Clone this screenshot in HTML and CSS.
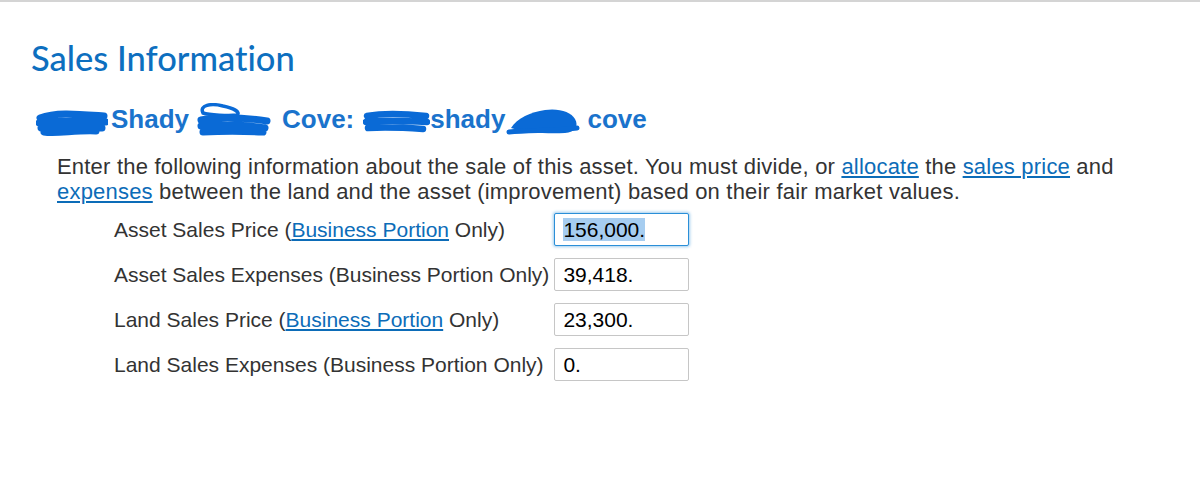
FILE: index.html
```html
<!DOCTYPE html>
<html lang="en">
<head>
<meta charset="utf-8">
<title>Sales Information</title>
<link rel="stylesheet" href="styles.css">
</head>
<body>
<div class="page">
  <h1 class="title">Sales Information</h1>
  <h2 class="subtitle"><svg class="scrib s1" width="72" height="28" viewBox="0 0 72 28"><path d="M4 10 C20 4 40 6 68 8 M3 15 C25 12 45 13 70 14 M5 20 C25 18 50 19 66 20 M8 24 C20 26 40 22 60 23" fill="none" stroke="#0a6ad6" stroke-width="7" stroke-linecap="round"/></svg><span class="word">Shady</span><svg class="scrib s2" width="74" height="34" viewBox="0 0 74 34"><path d="M6 10 C2 2 14 0 26 3 C36 5 44 9 40 12 C32 13 12 12 6 10 Z" fill="none" stroke="#0a6ad6" stroke-width="3.5"/><path d="M4 17 C25 13 50 15 70 18 M4 23 C25 21 50 22 68 25 M6 29 C25 28 45 28 66 29" fill="none" stroke="#0a6ad6" stroke-width="7" stroke-linecap="round"/></svg><span class="word w2">Cove:</span><svg class="scrib s3" width="67" height="24" viewBox="0 0 67 24"><path d="M4 6 C20 3 45 4 63 6 M3 12 C25 10 45 11 64 12 M5 18 C25 17 45 18 60 19" fill="none" stroke="#0a6ad6" stroke-width="6.5" stroke-linecap="round"/></svg><span class="word">shady</span><svg class="scrib s4" width="75" height="30" viewBox="0 0 75 30"><path d="M6 22 C12 12 26 6 40 4 C54 2 66 6 70 13 C74 20 70 26 60 27 C45 28 20 27 6 22 Z" fill="#0a6ad6"/><path d="M4 26 C25 24 50 25 72 22" fill="none" stroke="#0a6ad6" stroke-width="5" stroke-linecap="round"/></svg><span class="word w4">cove</span></h2>
  <p class="intro">Enter the following information about the sale of this asset. You must divide, or <a href="#">allocate</a> the <a href="#">sales price</a> and <a href="#">expenses</a> between the land and the asset (improvement) based on their fair market values.</p>
  <div class="form">
    <div class="label">Asset Sales Price (<a href="#">Business Portion</a> Only)</div>
    <div class="field focused"><span class="sel">156,000.</span></div>
    <div class="label">Asset Sales Expenses (Business Portion Only)</div>
    <div class="field">39,418.</div>
    <div class="label">Land Sales Price (<a href="#">Business Portion</a> Only)</div>
    <div class="field">23,300.</div>
    <div class="label">Land Sales Expenses (Business Portion Only)</div>
    <div class="field">0.</div>
  </div>
</div>
</body>
</html>
```

FILE: styles.css
```css
html, body {
  margin: 0;
  padding: 0;
  background: #ffffff;
}

.page {
  border-top: 2px solid #d4d4d4;
  padding: 0 0 0 31px;
  font-family: "Liberation Sans", Arial, sans-serif;
}

.title {
  margin: 0;
  padding-top: 36px;
  font-family: Lato, "Open Sans", sans-serif;
  font-weight: 500;
  font-size: 34.5px;
  line-height: 40px;
  color: #0d6fbf;
  font-variant-ligatures: none;
  font-feature-settings: "liga" 0;
}

.subtitle {
  margin: 25px 0 0 5px;
  font-family: "Liberation Sans", Arial, sans-serif;
  font-weight: bold;
  font-size: 26px;
  line-height: 30px;
  color: #1a73cc;
  white-space: nowrap;
}

.scrib {
  display: inline-block;
  vertical-align: -8px;
}

.s1 { margin-right: 3px; }
.s2 { margin-left: 8px; margin-right: 11px; vertical-align: -9px; }
.s3 { margin-left: 9px; vertical-align: -6px; }
.s4 { vertical-align: -8px; margin-right: 7px; }

.intro {
  margin: 17px 0 0 26px;
  width: 1110px;
  font-size: 22px;
  letter-spacing: 0.2px;
  line-height: 25px;
  color: #333333;
}

a {
  color: #0c6cb8;
  text-decoration: underline;
}

.form {
  display: grid;
  grid-template-columns: max-content 135px;
  column-gap: 5px;
  row-gap: 12px;
  margin: 9px 0 0 83px;
  align-items: center;
}

.label {
  font-size: 21px;
  color: #333333;
  white-space: nowrap;
}

.field {
  box-sizing: border-box;
  height: 33px;
  width: 135px;
  border: 1px solid #c6c6c6;
  border-radius: 2px;
  padding: 0 0 0 8px;
  font-size: 21px;
  line-height: 31px;
  color: #000000;
  background: #ffffff;
}

.field.focused {
  border-color: #2a8fd8;
  box-shadow: 0 0 3px 1px rgba(42, 143, 216, 0.45);
}

.sel {
  background: #a6cdf0;
}
```
